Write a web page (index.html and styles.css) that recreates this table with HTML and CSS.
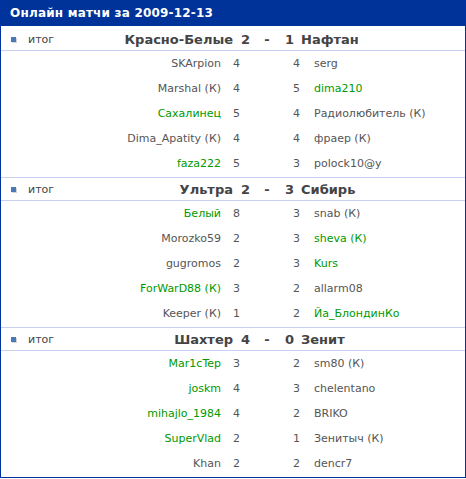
FILE: index.html
```html
<!DOCTYPE html>
<html lang="ru">
<head>
<meta charset="utf-8">
<link rel="stylesheet" href="styles.css">
</head>
<body>
<div class="panel">
  <div class="title">Онлайн матчи за 2009-12-13</div>

  <div class="match">
    <div class="mhead">
      <div class="res"><span class="ico"></span>итог</div>
      <div class="t1">Красно-Белые</div>
      <div class="s1">2</div>
      <div class="dash">-</div>
      <div class="s2">1</div>
      <div class="t2">Нафтан</div>
    </div>
    <div class="rows">
      <div class="row"><div class="p1">SKArpion</div><div class="n1">4</div><div class="n2">4</div><div class="p2">serg</div></div>
      <div class="row"><div class="p1">Marshal (К)</div><div class="n1">4</div><div class="n2">5</div><div class="p2 win">dima210</div></div>
      <div class="row"><div class="p1 win">Сахалинец</div><div class="n1">5</div><div class="n2">4</div><div class="p2">Радиолюбитель (К)</div></div>
      <div class="row"><div class="p1">Dima_Apatity (К)</div><div class="n1">4</div><div class="n2">4</div><div class="p2">фраер (К)</div></div>
      <div class="row"><div class="p1 win">faza222</div><div class="n1">5</div><div class="n2">3</div><div class="p2">polock10@y</div></div>
    </div>
  </div>

  <div class="match">
    <div class="mhead">
      <div class="res"><span class="ico"></span>итог</div>
      <div class="t1">Ультра</div>
      <div class="s1">2</div>
      <div class="dash">-</div>
      <div class="s2">3</div>
      <div class="t2">Сибирь</div>
    </div>
    <div class="rows">
      <div class="row"><div class="p1 win">Белый</div><div class="n1">8</div><div class="n2">3</div><div class="p2">snab (К)</div></div>
      <div class="row"><div class="p1">Morozko59</div><div class="n1">2</div><div class="n2">3</div><div class="p2 win">sheva (К)</div></div>
      <div class="row"><div class="p1">gugromos</div><div class="n1">2</div><div class="n2">3</div><div class="p2 win">Kurs</div></div>
      <div class="row"><div class="p1 win">ForWarD88 (К)</div><div class="n1">3</div><div class="n2">2</div><div class="p2">allarm08</div></div>
      <div class="row"><div class="p1">Keeper (К)</div><div class="n1">1</div><div class="n2">2</div><div class="p2 win">Йа_БлондинКо</div></div>
    </div>
  </div>

  <div class="match">
    <div class="mhead">
      <div class="res"><span class="ico"></span>итог</div>
      <div class="t1">Шахтер</div>
      <div class="s1">4</div>
      <div class="dash">-</div>
      <div class="s2">0</div>
      <div class="t2">Зенит</div>
    </div>
    <div class="rows">
      <div class="row"><div class="p1 win">Mar1cTep</div><div class="n1">3</div><div class="n2">2</div><div class="p2">sm80 (К)</div></div>
      <div class="row"><div class="p1 win">joskm</div><div class="n1">4</div><div class="n2">3</div><div class="p2">chelentano</div></div>
      <div class="row"><div class="p1 win">mihajlo_1984</div><div class="n1">4</div><div class="n2">2</div><div class="p2">BRIKO</div></div>
      <div class="row"><div class="p1 win">SuperVlad</div><div class="n1">2</div><div class="n2">1</div><div class="p2">Зенитыч (К)</div></div>
      <div class="row"><div class="p1">Khan</div><div class="n1">2</div><div class="n2">2</div><div class="p2">dencr7</div></div>
    </div>
  </div>
</div>
</body>
</html>
```

FILE: styles.css
```css
html, body {
  margin: 0;
  padding: 0;
  background: #fff;
}
body {
  font-family: "DejaVu Sans", Verdana, sans-serif;
  font-size: 11px;
  color: #555;
}
.panel {
  width: 466px;
  height: 478px;
  box-sizing: border-box;
  border: 1px solid #0033a0;
  border-top: none;
  overflow: hidden;
}
.title {
  height: 26px;
  line-height: 26px;
  background: #003399;
  color: #fff;
  font-weight: bold;
  font-size: 12px;
  letter-spacing: 0.2px;
  padding-left: 10px;
  margin: 0 -1px 2px;
}
.match + .match {
  border-top: 1px solid #c8cff0;
}
.mhead {
  display: grid;
  grid-template-columns: 104px 128px 21px 26px 14px 1fr;
  align-items: center;
  height: 22px;
  border-bottom: 1px solid #c8cff0;
  font-size: 13px;
  font-weight: bold;
  color: #444;
}
.res {
  display: flex;
  align-items: center;
  font-size: 11px;
  font-weight: normal;
  color: #444;
  padding-left: 10px;
}
.ico {
  width: 5px;
  height: 5px;
  background: #4a7ab5;
  box-shadow: 1px 1px 0 #d4d4d4;
  margin-right: 12px;
}
.t1 { text-align: right; }
.s1 { padding-left: 8px; }
.dash { text-align: center; }
.s2 { text-align: right; }
.t2 { padding-left: 7px; }
.rows {
  padding-bottom: 1px;
}
.row {
  display: grid;
  grid-template-columns: 220px 12px 67px 14px 1fr;
  align-items: center;
  height: 25px;
}
.p1 { text-align: right; }
.n1 { grid-column: 3; text-align: left; }
.n2 { grid-column: 3; text-align: right; }
.n1, .n2 { grid-row: 1; }
.p2 { grid-column: 5; }
.win { color: #009900; }
```
